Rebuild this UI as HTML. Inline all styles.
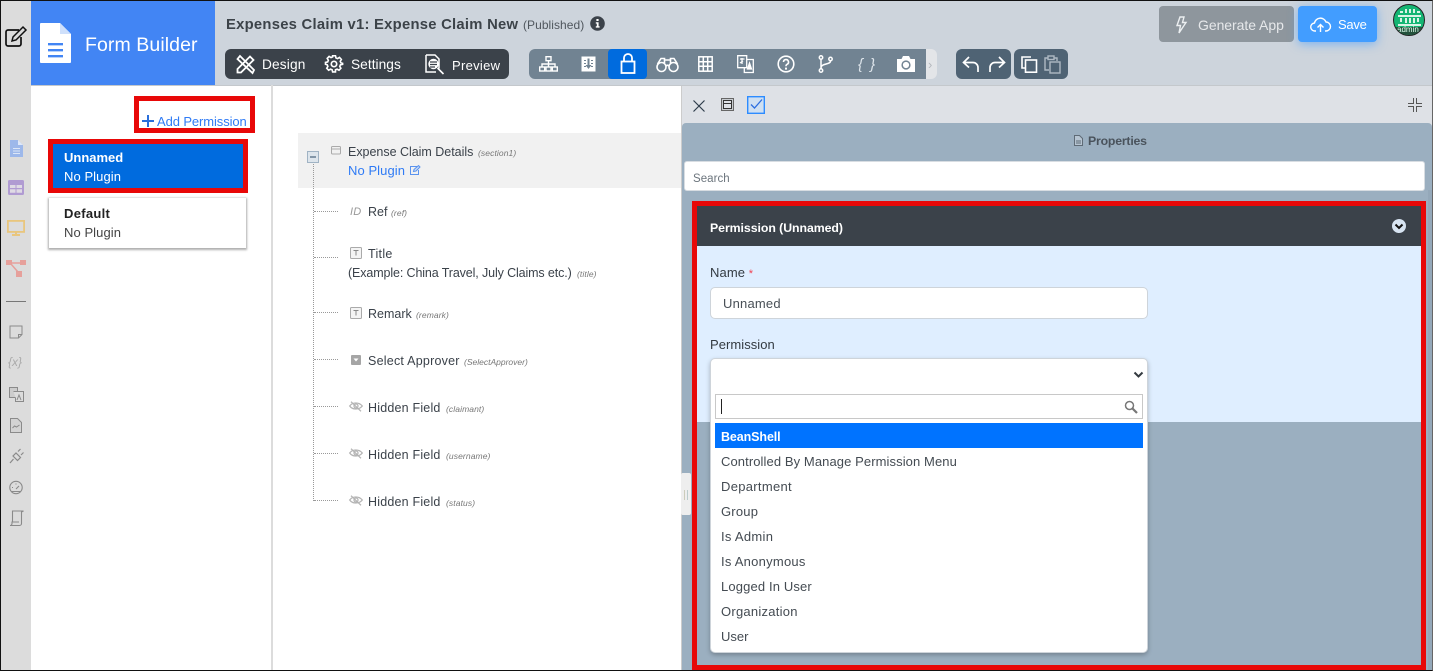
<!DOCTYPE html>
<html><head><meta charset="utf-8"><title>Form Builder</title>
<style>
*{box-sizing:border-box}
html,body{margin:0;padding:0;width:1433px;height:671px;overflow:hidden;background:#fff;font-family:"Liberation Sans",sans-serif;color:#3b424a}
.a{position:absolute}
.t{position:absolute;white-space:nowrap;font-size:13px;line-height:16px;letter-spacing:.3px}
.s{position:absolute;overflow:visible}
.m{font-style:italic;font-size:8.5px;color:#777;letter-spacing:.1px}
.i{left:721px;color:#444b52;letter-spacing:.3px}
</style></head><body>
<div class="a" style="left:0;top:0;width:1433px;height:671px;overflow:hidden">
<!-- backgrounds -->
<div class="a" style="left:0;top:0;width:31px;height:671px;background:#dcdcdc"></div>
<div class="a" style="left:31px;top:1px;width:184px;height:84px;background:#4285f4"></div>
<div class="a" style="left:215px;top:1px;width:1218px;height:84px;background:#cdd4dc"></div>
<div class="a" style="left:31px;top:85px;width:1402px;height:1px;background:#c4c8cc"></div>
<div class="a" style="left:271px;top:85px;width:2px;height:586px;background:#dcdcdc"></div>

<!-- page icon top-left -->
<svg class="s" style="left:4px;top:26px" width="24" height="22" viewBox="0 0 24 22" fill="none" stroke="#111" stroke-width="1.7"><path d="M15 4H4a2 2 0 0 0-2 2v12a2 2 0 0 0 2 2h11a2 2 0 0 0 2-2v-7"/><path d="M9 11l-1 4 4-1 10-10-3-3z" stroke-width="1.5"/></svg>
<!-- form builder logo -->
<svg class="s" style="left:40px;top:23px" width="31" height="40" viewBox="0 0 31 40"><path d="M1 0h19l11 11v28a1 1 0 0 1-1 1H1a1 1 0 0 1-1-1V1a1 1 0 0 1 1-1z" fill="#fff"/><path d="M20 0v11h11z" fill="#cfe0fb"/><path d="M8 20h15v2.4H8zM8 26h15v2.4H8zM8 32h15v2.4H8z" fill="#4285f4"/></svg>
<div class="t" style="left:85px;top:33px;font-size:19.5px;line-height:24px;color:#fff;letter-spacing:.08px">Form Builder</div>

<div class="t" style="left:226px;top:16px;font-size:14.8px;line-height:18px;font-weight:700;color:#3c4349;letter-spacing:.26px">Expenses Claim v1: Expense Claim New</div>
<div class="t" style="left:523px;top:17px;font-size:12px;color:#50575e;letter-spacing:.05px">(Published)</div>
<svg class="s" style="left:590px;top:16px" width="15" height="15" viewBox="0 0 15 15"><circle cx="7.5" cy="7.5" r="7.3" fill="#3b424a"/><path d="M6.4 3h2.2v2H6.4zM5.8 6.3h2.8v4h1v1.3H5.8v-1.300h1v-2.700h-1z" fill="#fff"/></svg>

<!-- design bar -->
<div class="a" style="left:225px;top:49px;width:284px;height:30px;border-radius:6px;background:#3b424a"></div>
<svg class="s" style="left:236px;top:55px" width="19" height="19" viewBox="0 0 19 19" fill="none" stroke="#fff" stroke-width="1.8"><path d="M4 1l14 14-1.500 3L1.500 4z"/><path d="M14 1.500l3.500 3.500L5 17.500H1.500V14z"/></svg>
<div class="t" style="left:262px;top:57px;font-size:13.7px;color:#fff;letter-spacing:.15px">Design</div>
<svg class="s" style="left:325px;top:55px" width="18" height="18" viewBox="0 0 18 18" fill="none" stroke="#fff" stroke-width="1.7"><circle cx="9" cy="9" r="2.700"/><path d="M7.500 1h3l.5 2.300 1.700.7 2-1.200 2 2.100-1.200 2 .7 1.600L18 9v1l-2.300.5-.7 1.700 1.200 2-2 2.100-2-1.200-1.700.7L10.500 18h-3L7 15.800l-1.700-.7-2 1.200-2-2.100 1.200-2-.7-1.700L0 10V8l2.300-.5.700-1.700-1.200-2 2-2.100 2 1.200 1.700-.7z" transform="translate(.5 -.2) scale(.95)"/></svg>
<div class="t" style="left:351px;top:57px;font-size:13.7px;color:#fff;letter-spacing:.05px">Settings</div>
<svg class="s" style="left:425px;top:54px" width="20" height="21" viewBox="0 0 20 21" fill="none" stroke="#fff"><path d="M1 1h9l4 4v9.500" stroke-width="1.500"/><path d="M1 1v17h10" stroke-width="1.500"/><circle cx="8.500" cy="10" r="5.200" fill="#fff" stroke="none"/><path d="M5 8h7M5 10.500h7M5 13h5" stroke="#3b424a" stroke-width="1.200"/><path d="M12.500 14l6 6" stroke-width="1.600"/></svg>
<div class="t" style="left:452px;top:58px;font-size:13px;color:#fff;letter-spacing:.3px">Preview</div>

<!-- tool bar -->
<div class="a" style="left:529px;top:49px;width:408px;height:30px;border-radius:6px;background:#e3e5e8"></div>
<div class="a" style="left:529px;top:49px;width:397px;height:30px;border-radius:6px 0 0 6px;background:#718392"></div>
<div class="a" style="left:608px;top:49px;width:39px;height:30px;border-radius:4px;background:#006bde"></div>
<div class="t" style="left:928px;top:57px;color:#b4b8bd;font-size:13px">›</div>
<svg class="s" style="left:539px;top:56px" width="19" height="16" viewBox="0 0 19 16" fill="none" stroke="#fff" stroke-width="1.400"><rect x="7" y=".7" width="5" height="4"/><rect x=".7" y="11" width="5" height="4"/><rect x="7" y="11" width="5" height="4"/><rect x="13.300" y="11" width="5" height="4"/><path d="M9.500 5v6M3 11V8h13v3"/></svg>
<svg class="s" style="left:581px;top:56px" width="15" height="16" viewBox="0 0 15 16"><rect x=".5" y=".5" width="14" height="15" fill="#fff"/><path d="M3 4h2v1H3zM3 7h2v1H3zM3 10h2v1H3zM10 4h2v1h-2zM10 7h2v1h-2zM10 10h2v1h-2zM6.500 2.500h2V9h2l-3 4-3-4h2z" fill="#718392"/></svg>
<svg class="s" style="left:620px;top:53px" width="16" height="21" viewBox="0 0 16 21" fill="none" stroke="#fff" stroke-width="1.800"><rect x="1.500" y="8.500" width="13" height="11.500"/><path d="M4 8.500V5a4 4 0 0 1 8 0v3.500"/></svg>
<svg class="s" style="left:656px;top:56px" width="23" height="17" viewBox="0 0 23 17" fill="none" stroke="#fff" stroke-width="1.600"><circle cx="5.500" cy="11" r="4.500"/><circle cx="17.500" cy="11" r="4.500"/><path d="M10 10c1-1 2-1 3 0M1.500 8L5 2.500h3.500V7M21.500 8L18 2.500h-3.500V7M8.500 4h6"/></svg>
<svg class="s" style="left:698px;top:56px" width="15" height="16" viewBox="0 0 15 16" fill="none" stroke="#fff" stroke-width="1.500"><rect x=".8" y=".8" width="13.400" height="14.400" fill="none"/><path d="M5.300 1v14M9.700 1v14M1 5.700h13M1 10.300h13"/></svg>
<svg class="s" style="left:737px;top:55px" width="17" height="18" viewBox="0 0 17 18" fill="none" stroke="#fff" stroke-width="1.300"><path d="M.7.700h9v12h-9z"/><path d="M3 4h4.500M5 3v6M3 8l3-2M10 4.500h6.300v13h-9v-4.500"/><path d="M10.500 14l2-6 2 6z" fill="#fff"/></svg>
<svg class="s" style="left:777px;top:55px" width="18" height="18" viewBox="0 0 18 18" fill="none" stroke="#fff" stroke-width="1.600"><circle cx="9" cy="9" r="7.800"/><path d="M6.500 7a2.500 2.500 0 1 1 3.600 2.300c-.8.400-1.100.9-1.100 1.900"/><path d="M8 12.600h2v2H8z" fill="#fff" stroke="none"/></svg>
<svg class="s" style="left:818px;top:55px" width="16" height="18" viewBox="0 0 16 18" fill="none" stroke="#fff" stroke-width="1.500"><circle cx="3" cy="2.500" r="1.700"/><circle cx="3" cy="15.500" r="1.700"/><circle cx="12.500" cy="4" r="1.700"/><path d="M3 4v10M12.500 6c0 4-9.500 2-9.500 7"/></svg>
<div class="t" style="left:858px;top:57px;font-size:15px;font-style:italic;color:#dfe6ec;letter-spacing:1.500px">{ }</div>
<svg class="s" style="left:897px;top:56px" width="18" height="16" viewBox="0 0 18 16"><path d="M0 3h4.500l1.500-3h6l1.500 3H18v13H0z" fill="#fff"/><circle cx="9" cy="9" r="4.600" fill="#718392"/><circle cx="9" cy="9" r="3.100" fill="#fff"/></svg>

<div class="a" style="left:956px;top:49px;width:55px;height:30px;border-radius:6px;background:#4f6374"></div>
<svg class="s" style="left:962px;top:56px" width="44" height="17" viewBox="0 0 44 17" fill="none" stroke="#fff" stroke-width="1.700"><path d="M7 1L1.500 6.500 7 11.500M2 6.500h9a5 5 0 0 1 5 5V16M37 1l5.500 5.500-5.500 5M42 6.500h-9a5 5 0 0 0-5 5V16"/></svg>
<div class="a" style="left:1014px;top:49px;width:54px;height:30px;border-radius:6px;background:#4f6374"></div>
<svg class="s" style="left:1021px;top:56px" width="17" height="17" viewBox="0 0 17 17" fill="none" stroke="#fff" stroke-width="1.600"><path d="M10 1H1v11h3"/><rect x="4.500" y="4" width="11" height="12.200"/></svg>
<svg class="s" style="left:1044px;top:55px" width="17" height="19" viewBox="0 0 17 19" fill="none" stroke="#aeb9c3" stroke-width="1.400"><path d="M4 3H1v12h4M10 3h3v3"/><rect x="4" y="1" width="6" height="3.500"/><rect x="6" y="7" width="10" height="11"/></svg>

<!-- generate/save -->
<div class="a" style="left:1159px;top:6px;width:135px;height:36px;border-radius:4px;background:#8e969d"></div>
<svg class="s" style="left:1175px;top:16px" width="12" height="18" viewBox="0 0 12 18" fill="none" stroke="#eceff1" stroke-width="1.400"><path d="M5 1h4L7.500 6.500H11L4 17l1.500-7.500H2z"/></svg>
<div class="t" style="left:1198px;top:17px;font-size:14px;color:#e6e8ea;letter-spacing:-.05px">Generate App</div>
<div class="a" style="left:1298px;top:6px;width:79px;height:36px;border-radius:4px;background:#429dff;box-shadow:0 2px 10px rgba(66,157,255,.6)"></div>
<svg class="s" style="left:1310px;top:16px" width="21" height="17" viewBox="0 0 21 17" fill="none" stroke="#fff" stroke-width="1.400"><path d="M6 15H5a4 4 0 0 1-.5-8A6 6 0 0 1 16 6a4.500 4.500 0 0 1 0 9h-1"/><path d="M10.500 16V9M7.500 11.500l3-3 3 3"/></svg>
<div class="t" style="left:1338px;top:17px;font-size:13px;color:#fff;letter-spacing:-.25px">Save</div>
<!-- avatar -->
<div class="a" style="left:1393px;top:4px;width:32px;height:32px;border-radius:50%;background:#14b573;border:1px solid #222;overflow:hidden">
<div class="a" style="left:0;top:22px;width:32px;height:10px;background:#24513c"></div>
<svg class="s" style="left:3px;top:3px" width="25" height="19" viewBox="0 0 25 19"><path d="M3 3h3v2H3zM8 1h2v4H8zM12 1h2v4h-2zM16 1h2v4h-2zM20 3h3v2h-3zM1 7h23v2H1zM3 10h2v4H3zM8 10h2v5H8zM12 10h2v5h-2zM16 10h2v5h-2zM20 10h2v4h-2zM1 16h23v2H1z" fill="#d9f3e6"/></svg>
<div class="t" style="left:3px;top:19px;font-size:8px;line-height:12px;color:#dfe;letter-spacing:0">admin</div>
</div>

<!-- sidebar icons -->
<svg class="s" style="left:10px;top:140px" width="13" height="17" viewBox="0 0 13 17"><path d="M0 0h8l5 5v12H0z" fill="#9db8ea"/><path d="M8 0v5h5z" fill="#dfe8f8"/><path d="M3 8h7v1H3zM3 10.500h7v1H3zM3 13h7v1H3z" fill="#dce6f7"/></svg>
<svg class="s" style="left:8px;top:180px" width="16" height="15" viewBox="0 0 16 15"><rect width="16" height="15" rx="1.500" fill="#b09bd2"/><path d="M2 5h5.500v3H2zM8.500 5H14v3H8.500zM2 9.300h5.500v3.500H2zM8.500 9.300H14v3.500H8.500z" fill="#dfdbe4"/></svg>
<svg class="s" style="left:7px;top:220px" width="18" height="16" viewBox="0 0 18 16" fill="none" stroke="#e9c67d" stroke-width="1.800"><rect x=".9" y=".9" width="16.200" height="11"/><path d="M9 12v3M5 15h8" stroke-width="2"/></svg>
<svg class="s" style="left:6px;top:259px" width="20" height="18" viewBox="0 0 20 18"><path d="M0 1h6v5H0zM14 1h6v5h-6zM10 12h6v6h-6z" fill="#e6a09b"/><path d="M5 4h10M5 5l7 8" stroke="#e6a09b" stroke-width="1.500"/></svg>
<div class="a" style="left:6px;top:301px;width:20px;height:1px;background:#777"></div>
<svg class="s" style="left:9px;top:325px" width="14" height="14" viewBox="0 0 14 14" fill="none" stroke="#8a8a8a" stroke-width="1"><path d="M1 1h12v8.500L9.500 13H1zM13 9.500H9.500V13"/></svg>
<div class="t" style="left:8px;top:354px;font-size:12px;font-style:italic;color:#aaa;letter-spacing:0">{x}</div>
<svg class="s" style="left:9px;top:387px" width="15" height="15" viewBox="0 0 15 15" fill="none" stroke="#8a8a8a"><path d="M.5.500h8v10h-8z" fill="#ccc"/><path d="M4.500 4.500h10v10h-8v-4" fill="#dcdcdc"/><path d="M8 13l2-5 2 5"/></svg>
<svg class="s" style="left:10px;top:418px" width="12" height="15" viewBox="0 0 12 15" fill="none" stroke="#8a8a8a"><path d="M.5.500h7l4 4v10H.5z" fill="#d3d3d3"/><path d="M2.500 10l2-2 2 1 3-2"/></svg>
<svg class="s" style="left:9px;top:448px" width="15" height="16" viewBox="0 0 15 16" fill="none" stroke="#8a8a8a" stroke-width="1.200"><path d="M1 15l3.500-4M4 8l4.500 4.500 3-3L7 5zM9 3.500L11.500 1M12 7l2.500-2.500"/></svg>
<svg class="s" style="left:9px;top:481px" width="14" height="13" viewBox="0 0 14 13" fill="none" stroke="#8a8a8a" stroke-width="1.100"><circle cx="7" cy="6.500" r="6.200"/><path d="M2 10.500h10M7 8l3-3M3 6.500h1M7 2.500v1"/></svg>
<svg class="s" style="left:9px;top:510px" width="15" height="16" viewBox="0 0 15 16" fill="none" stroke="#8a8a8a" stroke-width="1.100"><path d="M3.500 12V1h11l-2 1v11.500a2 2 0 0 1-2 2H1a2 2 0 0 0 2-2V12h7"/></svg>

<!-- permissions -->
<div class="a" style="left:134px;top:96px;width:121px;height:37px;border:5px solid #e80808"></div>
<svg class="s" style="left:142px;top:115px" width="12" height="12" viewBox="0 0 12 12"><path d="M5 0h2v5h5v2H7v5H5V7H0V5h5z" fill="#2a6fdb"/></svg>
<div class="t" style="left:157px;top:114px;color:#2f7bf5;letter-spacing:-.1px">Add Permission</div>

<div class="a" style="left:48px;top:139px;width:200px;height:54px;background:#006bde;border:5px solid #e80808"></div>
<div class="t" style="left:64px;top:150px;color:#fff;font-weight:700;letter-spacing:0">Unnamed</div>
<div class="t" style="left:64px;top:169px;color:#fff;letter-spacing:.07px">No Plugin</div>
<div class="a" style="left:49px;top:198px;width:197px;height:50px;background:#fff;box-shadow:0 1px 2px 1px rgba(0,0,0,.32)"></div>
<div class="t" style="left:64px;top:206px;color:#222;font-weight:700;letter-spacing:.3px">Default</div>
<div class="t" style="left:64px;top:225px;color:#444;letter-spacing:.07px">No Plugin</div>

<!-- tree -->
<div class="a" style="left:298px;top:133px;width:384px;height:55px;background:#f1f1f1"></div>
<div class="a" style="left:313px;top:162px;width:0;height:339px;border-left:1px dotted #999"></div>
<div class="a" style="left:307px;top:151px;width:12px;height:12px;background:#dde5ec;border:1px solid #a0b3c4"></div>
<div class="a" style="left:310px;top:156px;width:6px;height:1.500px;background:#8396a8"></div>
<svg class="s" style="left:331px;top:146px" width="10" height="9" viewBox="0 0 10 9" fill="none" stroke="#aaa"><rect x=".5" y=".5" width="9" height="7.500" rx="1"/><path d="M.5 3h9"/></svg>
<div class="t" style="left:348px;top:144px;font-size:12.5px;color:#3b424a;letter-spacing:-.02px">Expense Claim Details</div>
<div class="t m" style="left:478px;top:145px">(section1)</div>
<div class="t" style="left:348px;top:163px;color:#2f7bf5;letter-spacing:.07px">No Plugin</div>
<svg class="s" style="left:410px;top:165px" width="11" height="10" viewBox="0 0 11 10" fill="none" stroke="#5b93ee"><path d="M7 1.500H.5v8h8V5"/><path d="M3.500 6.500L4 4.500 8.500.5 10 2 6 6z" fill="#c9dcf8"/></svg>

<div class="a" style="left:314px;top:211px;width:24px;border-top:1px dotted #999"></div>
<div class="t" style="left:350px;top:204px;font-size:11px;font-style:italic;color:#999;letter-spacing:.2px">ID</div>
<div class="t" style="left:368px;top:204px;font-size:12.5px;letter-spacing:0">Ref</div>
<div class="t m" style="left:391px;top:205px">(ref)</div>

<div class="a" style="left:314px;top:257px;width:24px;border-top:1px dotted #999"></div>
<svg class="s" style="left:350px;top:247px" width="12" height="12" viewBox="0 0 12 12"><rect x=".5" y=".5" width="11" height="11" rx="1" fill="#f4f4f4" stroke="#aaa"/><path d="M3.500 3.500h5M6 3.500v5" stroke="#888" fill="none"/></svg>
<div class="t" style="left:368px;top:246px;font-size:12.5px">Title</div>
<div class="t" style="left:348px;top:265px;font-size:12.5px;letter-spacing:-.12px">(Example: China Travel, July Claims etc.)</div>
<div class="t m" style="left:577px;top:266px">(title)</div>

<div class="a" style="left:314px;top:312px;width:24px;border-top:1px dotted #999"></div>
<svg class="s" style="left:350px;top:307px" width="12" height="12" viewBox="0 0 12 12"><rect x=".5" y=".5" width="11" height="11" rx="1" fill="#f4f4f4" stroke="#aaa"/><path d="M3.500 3.500h5M6 3.500v5" stroke="#888" fill="none"/></svg>
<div class="t" style="left:368px;top:306px;font-size:12.5px;letter-spacing:0">Remark</div>
<div class="t m" style="left:416px;top:307px">(remark)</div>

<div class="a" style="left:314px;top:359px;width:24px;border-top:1px dotted #999"></div>
<svg class="s" style="left:351px;top:355px" width="10" height="10" viewBox="0 0 10 10"><rect width="10" height="10" rx="1" fill="#a5a5a5"/><path d="M2.500 3.500h5L5 6.500z" fill="#fff"/></svg>
<div class="t" style="left:368px;top:353px;font-size:12.5px;letter-spacing:.23px">Select Approver</div>
<div class="t m" style="left:464px;top:354px;letter-spacing:0">(SelectApprover)</div>

<div class="a" style="left:314px;top:406px;width:24px;border-top:1px dotted #999"></div>
<svg class="s" style="left:349px;top:401px" width="14" height="11" viewBox="0 0 14 11" fill="none" stroke="#b5b5b5" stroke-width="1.300"><path d="M.7 5C3.500 1 10 1 13.300 5c-3.300 4-9.800 4-12.600 0zM2 .7l10 9.600"/><circle cx="7" cy="5" r="2"/></svg>
<div class="t" style="left:368px;top:400px;font-size:12.5px;letter-spacing:.2px">Hidden Field</div>
<div class="t m" style="left:446px;top:401px">(claimant)</div>

<div class="a" style="left:314px;top:453px;width:24px;border-top:1px dotted #999"></div>
<svg class="s" style="left:349px;top:448px" width="14" height="11" viewBox="0 0 14 11" fill="none" stroke="#b5b5b5" stroke-width="1.300"><path d="M.7 5C3.500 1 10 1 13.300 5c-3.300 4-9.800 4-12.600 0zM2 .7l10 9.600"/><circle cx="7" cy="5" r="2"/></svg>
<div class="t" style="left:368px;top:447px;font-size:12.5px;letter-spacing:.2px">Hidden Field</div>
<div class="t m" style="left:446px;top:448px">(username)</div>

<div class="a" style="left:314px;top:500px;width:24px;border-top:1px dotted #999"></div>
<svg class="s" style="left:349px;top:495px" width="14" height="11" viewBox="0 0 14 11" fill="none" stroke="#b5b5b5" stroke-width="1.300"><path d="M.7 5C3.500 1 10 1 13.300 5c-3.300 4-9.800 4-12.600 0zM2 .7l10 9.600"/><circle cx="7" cy="5" r="2"/></svg>
<div class="t" style="left:368px;top:494px;font-size:12.5px;letter-spacing:.2px">Hidden Field</div>
<div class="t m" style="left:446px;top:495px">(status)</div>

<!-- right panel -->
<div class="a" style="left:681px;top:86px;width:752px;height:585px;background:#dee1e6;border-left:1px solid #ccc"></div>
<div class="a" style="left:682px;top:123px;width:750px;height:548px;background:#9bafc0;border-radius:4px 4px 0 0"></div>
<div class="a" style="left:1428px;top:190px;width:4px;height:481px;background:#94a8b9"></div>
<div class="a" style="left:681px;top:473px;width:10px;height:42px;background:#eee;border-radius:2px"></div>
<div class="a" style="left:684px;top:490px;width:4px;height:10px;border-left:1px solid #ccb;border-right:1px solid #bcc"></div>
<svg class="s" style="left:693px;top:100px" width="12" height="12" viewBox="0 0 12 12" stroke="#2e3c4a" stroke-width="1.200"><path d="M.5.500l11 11M11.500.500l-11 11"/></svg>
<svg class="s" style="left:721px;top:98px" width="13" height="13" viewBox="0 0 13 13" fill="none" stroke="#333"><rect x=".5" y=".5" width="12" height="12" fill="#c8ccd0" stroke="#666"/><rect x="2.500" y="2.500" width="8" height="8" fill="#dee1e6"/><path d="M2.500 5.500h8"/></svg>
<svg class="s" style="left:747px;top:96px" width="18" height="18" viewBox="0 0 18 18" fill="none"><rect x=".7" y=".7" width="16.600" height="16.600" fill="#cfe0f2" stroke="#2d8cff" stroke-width="1.400"/><path d="M4 8.500l3.500 3.500L15 3.500" stroke="#2d6fe0" stroke-width="1.300"/></svg>
<svg class="s" style="left:1408px;top:98px" width="14" height="14" viewBox="0 0 14 14" fill="none" stroke="#555" stroke-width="1"><path d="M5.500 0v5.500H0M8.500 0v5.500H14M5.500 14V8.500H0M8.500 14V8.500H14"/></svg>

<svg class="s" style="left:1074px;top:135px" width="9" height="11" viewBox="0 0 9 11" fill="none" stroke="#5f6b76"><path d="M.5.500h5l3 3v7h-8z" fill="#b6c4d1"/><path d="M2 6h5M2 8h5"/></svg>
<div class="t" style="left:1088px;top:133px;font-size:12.3px;font-weight:700;color:#4a535c;letter-spacing:-.2px">Properties</div>
<div class="a" style="left:684px;top:161px;width:741px;height:30px;background:#fff;border:1px solid #d8dde2;border-radius:3px"></div>
<div class="t" style="left:693px;top:171px;font-size:11.5px;color:#6c757d;letter-spacing:.05px">Search</div>

<div class="a" style="left:692px;top:201px;width:734px;height:469px;border:5px solid #e80808"></div>
<div class="a" style="left:697px;top:206px;width:724px;height:40px;background:#3b424a"></div>
<div class="t" style="left:710px;top:220px;font-size:12.3px;font-weight:700;color:#fff;letter-spacing:-.05px">Permission (Unnamed)</div>
<svg class="s" style="left:1392px;top:219px" width="14" height="14" viewBox="0 0 14 14"><circle cx="7" cy="7" r="7" fill="#d7e4f2"/><path d="M3.500 5.500L7 9l3.500-3.500" fill="none" stroke="#111" stroke-width="2"/></svg>
<div class="a" style="left:697px;top:246px;width:724px;height:176px;background:#dfeeff"></div>
<div class="t" style="left:710px;top:265px;color:#333a41;letter-spacing:.1px">Name <span style="color:#f04050;font-size:11px">*</span></div>
<div class="a" style="left:710px;top:287px;width:438px;height:32px;background:#fff;border:1px solid #ced4da;border-radius:5px"></div>
<div class="t" style="left:723px;top:296px;color:#495057;letter-spacing:.2px">Unnamed</div>
<div class="t" style="left:710px;top:337px;color:#333a41;letter-spacing:.05px">Permission</div>

<div class="a" style="left:710px;top:358px;width:438px;height:295px;background:#fff;border:1px solid #ced4da;border-radius:5px;box-shadow:0 2px 5px rgba(0,0,0,.25)"></div>
<svg class="s" style="left:1133px;top:371px" width="11" height="8" viewBox="0 0 11 8"><path d="M1.500 1.500L5.500 5.500 9.500 1.500" fill="none" stroke="#343a40" stroke-width="2"/></svg>
<div class="a" style="left:715px;top:394px;width:428px;height:25px;background:#fff;border:1px solid #c8c8c8"></div>
<div class="a" style="left:721px;top:399px;width:1px;height:15px;background:#222"></div>
<svg class="s" style="left:1124px;top:400px" width="14" height="14" viewBox="0 0 14 14" fill="none" stroke="#777"><circle cx="5.500" cy="5.500" r="4" stroke-width="1.500"/><path d="M8.500 8.500L13 13" stroke-width="2.200"/></svg>
<div class="a" style="left:715px;top:423px;width:428px;height:25px;background:#0073ff"></div>
<div class="t" style="left:721px;top:429px;font-size:12.5px;color:#fff;font-weight:700;letter-spacing:-.1px">BeanShell</div>
<div class="t i" style="top:454px;letter-spacing:.09px">Controlled By Manage Permission Menu</div>
<div class="t i" style="top:479px">Department</div>
<div class="t i" style="top:504px;letter-spacing:.2px">Group</div>
<div class="t i" style="top:529px">Is Admin</div>
<div class="t i" style="top:554px;letter-spacing:.25px">Is Anonymous</div>
<div class="t i" style="top:579px;letter-spacing:.14px">Logged In User</div>
<div class="t i" style="top:604px;letter-spacing:.25px">Organization</div>
<div class="t i" style="top:629px;letter-spacing:0">User</div>

<!-- outer border -->
<div class="a" style="left:0;top:0;width:1433px;height:671px;border:1px solid #111;border-right-color:#666;pointer-events:none"></div>
</div>
</body></html>
